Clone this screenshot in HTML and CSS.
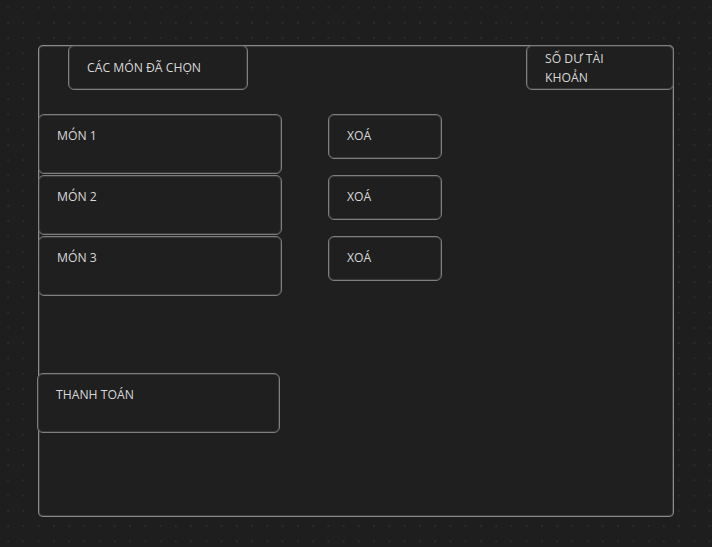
FILE: index.html
```html
<!DOCTYPE html>
<html lang="vi">
<head>
<meta charset="utf-8">
<title>Giỏ hàng</title>
<link rel="stylesheet" href="styles.css">
</head>
<body>
<main class="frame">
  <header class="head">
    <div class="box title">CÁC MÓN ĐÃ CHỌN</div>
    <div class="box balance">SỐ DƯ TÀI<br>KHOẢN</div>
  </header>
  <section class="list">
    <div class="row">
      <div class="box item">MÓN 1</div>
      <div class="box del">XOÁ</div>
    </div>
    <div class="row">
      <div class="box item">MÓN 2</div>
      <div class="box del">XOÁ</div>
    </div>
    <div class="row">
      <div class="box item">MÓN 3</div>
      <div class="box del">XOÁ</div>
    </div>
  </section>
  <div class="box pay">THANH TOÁN</div>
</main>
</body>
</html>
```
FILE: styles.css
```css
html, body {
  margin: 0;
  padding: 0;
}
body {
  width: 712px;
  height: 547px;
  overflow: hidden;
  background-color: #1e1e1e;
  background-image: radial-gradient(circle at center, #2c2c2c 0, #2c2c2c 0.9px, transparent 1.3px);
  background-size: 15.25px 15.25px;
  background-position: 0.5px 0px;
  font-family: "Open Sans", "Noto Sans", sans-serif;
  font-size: 12.2px;
  color: #d8d8d8;
}
.frame {
  box-sizing: border-box;
  margin: 45px 0 0 38px;
  width: 636px;
  height: 472px;
  background: #1f1f1f;
  border-radius: 5px;
  box-shadow: inset 0 0 0 1px #8a8a8a, inset 0 0 0 2px rgba(120, 120, 120, 0.35);
  display: flex;
  flex-direction: column;
}
.box {
  box-sizing: border-box;
  background: #1f1f1f;
  border: 1px solid #7e7e7e;
  box-shadow: inset 0 0 0 1px rgba(110, 110, 110, 0.35);
  border-radius: 6px;
  padding: 12px 18px;
  line-height: 19px;
}
.head {
  display: flex;
  align-items: flex-start;
  padding-left: 30px;
}
.title {
  width: 180px;
  height: 45px;
  padding-top: 12px;
}
.balance {
  margin-left: auto;
  width: 148px;
  height: 45px;
  padding-top: 3px;
}
.list {
  margin-top: 24px;
  display: flex;
  flex-direction: column;
  gap: 1px;
}
.row {
  display: flex;
  align-items: flex-start;
}
.item {
  width: 244px;
  height: 60px;
  padding-top: 11px;
}
.del {
  margin-left: 46px;
  width: 114px;
  height: 45px;
  padding-top: 11px;
}
.pay {
  margin: 77px 0 0 -1px;
  width: 243px;
  height: 60px;
  padding-top: 11px;
}
```
